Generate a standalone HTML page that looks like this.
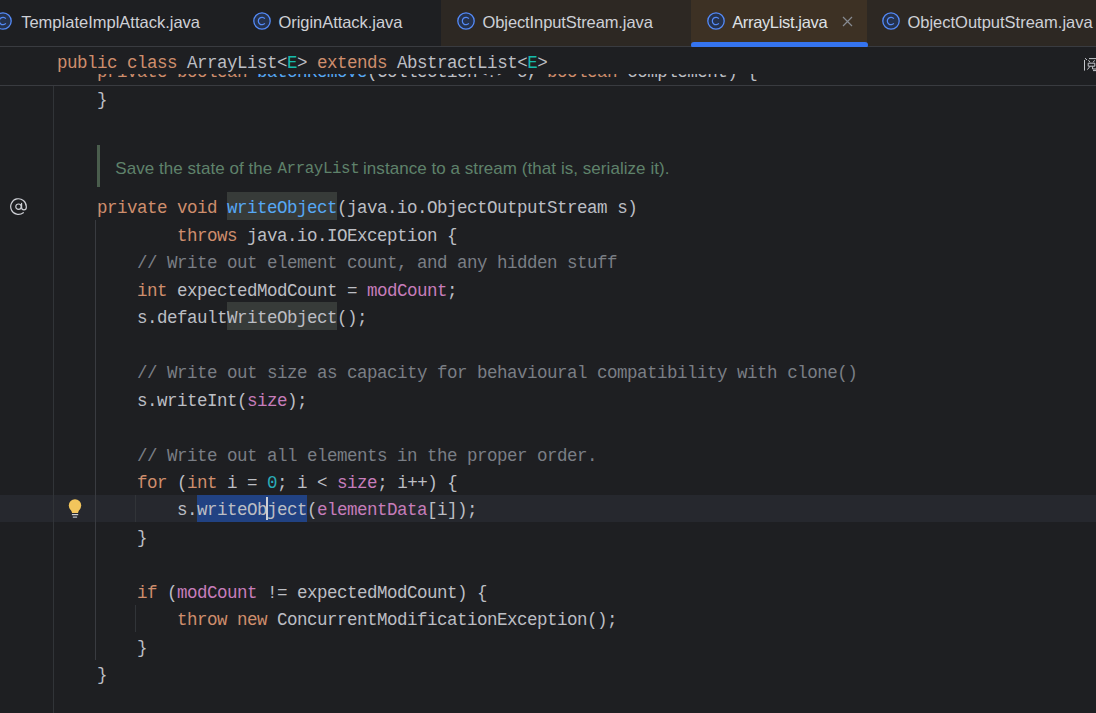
<!DOCTYPE html>
<html><head><meta charset="utf-8">
<style>
html,body{margin:0;padding:0;}
body{width:1096px;height:713px;background:#1e1f22;overflow:hidden;position:relative;font-family:"Liberation Sans",sans-serif;}
.abs{position:absolute;}
.tabbg{top:0;height:46px;}
.tab{top:0;height:46px;line-height:45px;font-size:16.5px;color:#ced0d6;white-space:pre;}
.ico{top:12px;width:18px;height:18px;}
.code{font-family:"Liberation Mono",monospace;font-size:17.5px;letter-spacing:-0.5px;color:#bcbec4;white-space:pre;line-height:27.48px;height:27.48px;left:57.0px;}
.k{color:#cf8e6d}.c{color:#7a7e85}.f{color:#c77dbb}.m{color:#56a8f5}.n{color:#2aacb8}.t{color:#16baac}
.guide{width:1px;}
</style></head><body>
<div class="abs tabbg" style="left:441px;width:250px;background:#2d2823"></div>
<div class="abs tabbg" style="left:691px;width:176px;background:#3d3124"></div>
<div class="abs tabbg" style="left:867px;width:229px;background:#2d2823"></div>
<div class="abs" style="left:0;top:46px;width:1096px;height:1px;background:#393b40"></div>
<div class="abs" style="left:690.5px;top:42px;width:177px;height:6px;background:#3574f0;border-radius:3px"></div>
<svg class="abs ico" style="left:-6px" viewBox="0 0 18 18"><circle cx="9" cy="9" r="8.2" fill="#25324d" stroke="#548af7" stroke-width="1.3"/><path d="M11.85 6.6A3.7 3.7 0 1 0 11.85 11.4" fill="none" stroke="#548af7" stroke-width="1.25"/></svg>
<svg class="abs ico" style="left:253px" viewBox="0 0 18 18"><circle cx="9" cy="9" r="8.2" fill="#25324d" stroke="#548af7" stroke-width="1.3"/><path d="M11.85 6.6A3.7 3.7 0 1 0 11.85 11.4" fill="none" stroke="#548af7" stroke-width="1.25"/></svg>
<svg class="abs ico" style="left:457px" viewBox="0 0 18 18"><circle cx="9" cy="9" r="8.2" fill="#25324d" stroke="#548af7" stroke-width="1.3"/><path d="M11.85 6.6A3.7 3.7 0 1 0 11.85 11.4" fill="none" stroke="#548af7" stroke-width="1.25"/></svg>
<svg class="abs ico" style="left:707px" viewBox="0 0 18 18"><circle cx="9" cy="9" r="8.2" fill="#25324d" stroke="#548af7" stroke-width="1.3"/><path d="M11.85 6.6A3.7 3.7 0 1 0 11.85 11.4" fill="none" stroke="#548af7" stroke-width="1.25"/></svg>
<svg class="abs ico" style="left:882px" viewBox="0 0 18 18"><circle cx="9" cy="9" r="8.2" fill="#25324d" stroke="#548af7" stroke-width="1.3"/><path d="M11.85 6.6A3.7 3.7 0 1 0 11.85 11.4" fill="none" stroke="#548af7" stroke-width="1.25"/></svg>
<div class="abs tab" style="left:21.2px;letter-spacing:0px;color:#ced0d6">TemplateImplAttack.java</div>
<div class="abs tab" style="left:278.5px;letter-spacing:-0.05px;color:#ced0d6">OriginAttack.java</div>
<div class="abs tab" style="left:482.5px;letter-spacing:-0.1px;color:#ced0d6">ObjectInputStream.java</div>
<div class="abs tab" style="left:732.2px;letter-spacing:-0.35px;color:#dfe1e5">ArrayList.java</div>
<div class="abs tab" style="left:907.4px;letter-spacing:0px;color:#ced0d6">ObjectOutputStream.java</div>
<svg class="abs" style="left:842px;top:16px;width:11px;height:11px" viewBox="0 0 11 11"><path d="M1 1L10 10M10 1L1 10" stroke="#868a91" stroke-width="1.2" fill="none"/></svg>
<div class="abs code" style="top:58.52px">    <span class="k">private boolean </span><span class="m">batchRemove</span>(Collection&lt;?&gt; c, <span class="k">boolean</span> complement) {</div>
<div class="abs code" style="top:86.60px">    }</div>
<div class="abs" style="left:0;top:47px;width:1096px;height:27px;background:#1e1f22"></div>
<div class="abs code" style="top:50.10px"><span class="k">public class </span>ArrayList&lt;<span class="t">E</span>&gt; <span class="k">extends </span>AbstractList&lt;<span class="t">E</span>&gt;</div>
<div class="abs" style="left:0;top:85px;width:1096px;height:1px;background:#393b40"></div>
<div class="abs" style="left:53px;top:86px;width:1px;height:627px;background:#313438"></div>
<div class="abs" style="left:0;top:495px;width:1096px;height:27px;background:#26282e"></div>
<div class="abs" style="left:53px;top:495px;width:1px;height:27px;background:#313438"></div>
<div class="abs guide" style="left:95px;top:220px;height:440px;background:#393b40"></div>
<div class="abs guide" style="left:135px;top:495px;height:27px;background:#313438"></div>
<div class="abs guide" style="left:135px;top:605px;height:27px;background:#313438"></div>
<div class="abs" style="left:97px;top:145px;width:2.5px;height:42px;background:#4a5d4d"></div>
<div class="abs" style="left:115.3px;top:154.5px;height:27px;line-height:27px;font-size:17px;color:#5f826b;white-space:pre;letter-spacing:0.05px">Save the state of the </div>
<div class="abs" style="left:277.5px;top:154.5px;height:27px;line-height:27px;font-size:17px;color:#5f826b;white-space:pre;font-family:'Liberation Mono',monospace;font-size:15.8px;letter-spacing:-0.4px;margin-top:1px">ArrayList</div>
<div class="abs" style="left:363px;top:154.5px;height:27px;line-height:27px;font-size:17px;color:#5f826b;white-space:pre;letter-spacing:0.05px">instance to a stream (that is, serialize it).</div>
<div class="abs" style="left:227px;top:192px;width:110px;height:28px;background:#373b39"></div>
<div class="abs" style="left:227px;top:302px;width:110px;height:28px;background:#373b39"></div>
<div class="abs" style="left:197px;top:495px;width:110px;height:27px;background:#214283"></div>
<div class="abs code" style="top:195.20px">    <span class="k">private void </span><span class="m hl">writeObject</span>(java.io.ObjectOutputStream s)</div>
<div class="abs code" style="top:222.68px">            <span class="k">throws</span> java.io.IOException {</div>
<div class="abs code" style="top:250.16px">        <span class="c">// Write out element count, and any hidden stuff</span></div>
<div class="abs code" style="top:277.64px">        <span class="k">int</span> expectedModCount = <span class="f">modCount</span>;</div>
<div class="abs code" style="top:305.12px">        s.default<span class="hl">WriteObject</span>();</div>
<div class="abs code" style="top:360.08px">        <span class="c">// Write out size as capacity for behavioural compatibility with clone()</span></div>
<div class="abs code" style="top:387.56px">        s.writeInt(<span class="f">size</span>);</div>
<div class="abs code" style="top:442.52px">        <span class="c">// Write out all elements in the proper order.</span></div>
<div class="abs code" style="top:470.00px">        <span class="k">for</span> (<span class="k">int</span> i = <span class="n">0</span>; i &lt; <span class="f">size</span>; i++) {</div>
<div class="abs code" style="top:497.48px">            s.<span class="sel">writeObject</span>(<span class="f">elementData</span>[i]);</div>
<div class="abs code" style="top:524.96px">        }</div>
<div class="abs code" style="top:579.92px">        <span class="k">if</span> (<span class="f">modCount</span> != expectedModCount) {</div>
<div class="abs code" style="top:607.40px">            <span class="k">throw new</span> ConcurrentModificationException();</div>
<div class="abs code" style="top:634.88px">        }</div>
<div class="abs code" style="top:662.36px">    }</div>
<div class="abs" style="left:266px;top:497px;width:2px;height:23px;background:#ced0d6"></div>
<svg class="abs" style="left:1080px;top:55px;width:16px;height:18px" viewBox="1080 55 16 18" fill="none" stroke="#c4c6cc" stroke-width="1"><path d="M1084.5 60V70.6M1085 58.2L1087 60M1089 58.6H1096M1088.5 60.3L1090 62.3M1094.6 60.3L1093.2 62.3M1088.2 63.2H1094.8V66.2H1088.2zM1090 66.4L1087.4 69.6M1092.6 66.4V69H1096M1093 70.6H1096"/></svg>
<svg class="abs" style="left:10px;top:198px;width:17px;height:17px" viewBox="0 0 17 17"><circle cx="8.5" cy="8.7" r="2.7" fill="none" stroke="#ced0d6" stroke-width="1.2"/><path d="M11.6 5.4V9.6A2.35 2.35 0 0 0 16.3 9.6V8.5A7.8 7.8 0 1 0 13.3 14.7" fill="none" stroke="#ced0d6" stroke-width="1.2" stroke-linecap="round"/></svg>
<svg class="abs" style="left:66px;top:497px;width:18px;height:24px" viewBox="0 0 18 24"><circle cx="9" cy="8.5" r="6.2" fill="#f2c55c"/><path d="M4.9 12.4H13.1L12 15.9H6.1z" fill="#f2c55c"/><rect x="5.9" y="17" width="6.3" height="1.2" fill="#ced0d6"/><rect x="6.8" y="19.4" width="4.3" height="1.5" fill="#9da0a8"/></svg>
</body></html>
